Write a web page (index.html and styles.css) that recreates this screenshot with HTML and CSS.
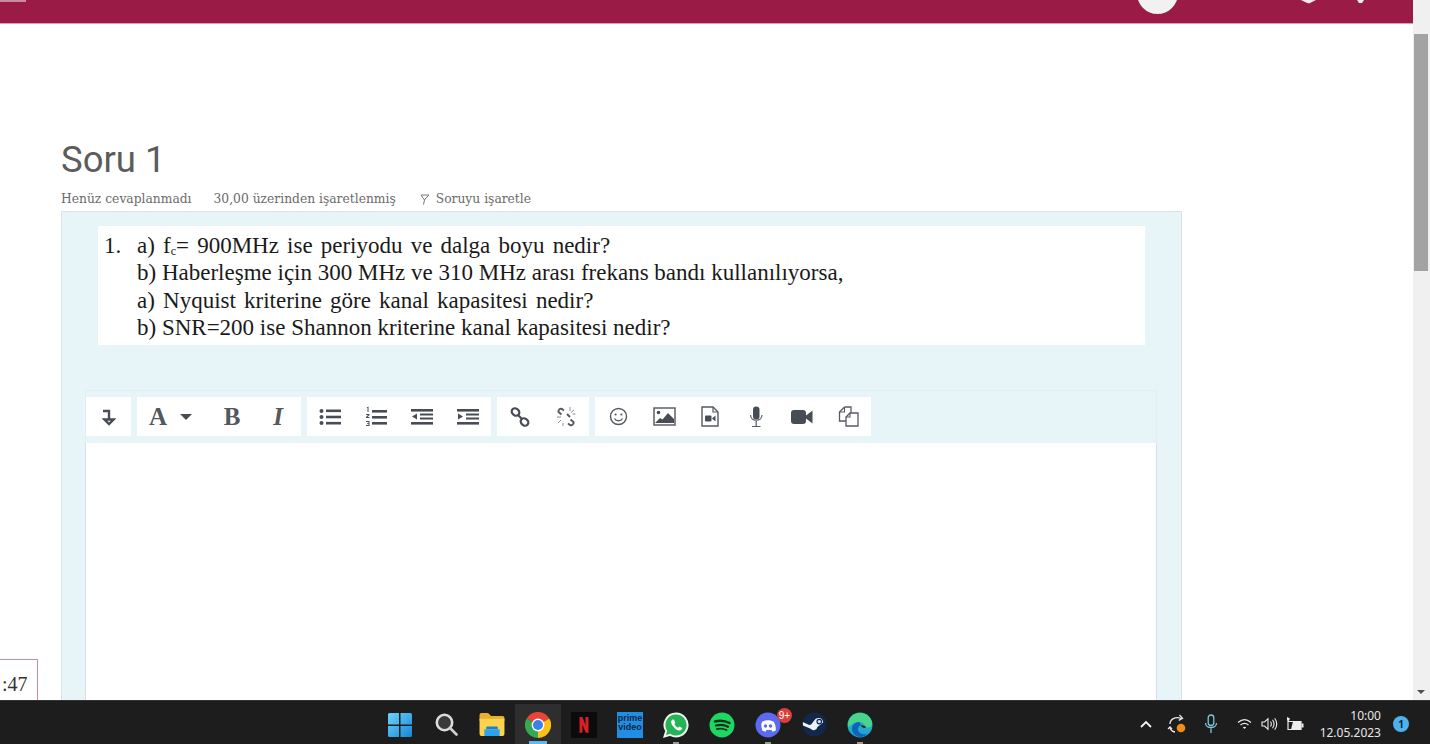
FILE: index.html
```html
<!DOCTYPE html>
<html lang="tr">
<head>
    <meta charset="UTF-8">
    <title>Soru 1</title>
    <link rel="stylesheet" href="styles.css">
</head>
<body>
    <div class="window">
        <div class="page">
            <header class="topbar">
                <span class="topbar-label"></span>
                <span class="avatar"></span>
                <svg class="topbar-icon first" width="15" height="4" viewBox="0 0 15 4"><path d="M0 0h15L8 3.500 5 2.500z" fill="#f6e9ee"/></svg>
                <svg class="topbar-icon second" width="9" height="3" viewBox="0 0 9 3"><path d="M1 0h7L6 3H3z" fill="#f6e9ee"/></svg>
            </header>

            <main class="content">
                <h1 class="question-title">Soru 1</h1>
                <div class="question-meta">
                    <span>Henüz cevaplanmadı</span>
                    <span>30,00 üzerinden işaretlenmiş</span>
                    <span class="flag-link">
                        <svg width="10" height="11" viewBox="0 0 10 11"><path d="M1 1h8L6 4 4.500 6 3.500 10.500M1 1l2 3 1.500 2" fill="none" stroke="#777" stroke-width="1"/></svg>
                        Soruyu işaretle
                    </span>
                </div>

                <section class="question-panel">
                    <div class="question-text">
                        <span class="question-number">1.</span>
                        <div>
                            <p class="wide">a) f<sub>c</sub>= 900MHz ise periyodu ve dalga boyu nedir?</p>
                            <p>b) Haberleşme için 300 MHz ve 310 MHz arası frekans bandı kullanılıyorsa,</p>
                            <p class="wide">a) Nyquist kriterine göre kanal kapasitesi nedir?</p>
                            <p>b) SNR=200 ise Shannon kriterine kanal kapasitesi nedir?</p>
                        </div>
                    </div>

                    <div class="editor">
                        <div class="toolbar">
                            <div class="tool-group">
                                <span class="tool narrow">
                                    <svg width="14" height="18" viewBox="0 0 14 18"><path d="M1 3h6v9M2.500 11.500h9L7 16z" fill="none" stroke="#484d55" stroke-width="2.400"/></svg>
                                </span>
                            </div>
                            <div class="tool-group">
                                <span class="tool font-tool"><span class="glyph">A</span><span class="caret"></span></span>
                                <span class="tool"><span class="glyph">B</span></span>
                                <span class="tool"><span class="glyph italic">I</span></span>
                            </div>
                            <div class="tool-group">
                                <span class="tool">
                                    <svg width="22" height="18" viewBox="0 0 22 18"><g fill="#484d55"><circle cx="2.500" cy="3" r="2"/><circle cx="2.500" cy="9" r="2"/><circle cx="2.500" cy="15" r="2"/><rect x="7" y="1.500" width="15" height="2.600"/><rect x="7" y="7.700" width="15" height="2.600"/><rect x="7" y="13.900" width="15" height="2.600"/></g></svg>
                                </span>
                                <span class="tool">
                                    <svg width="22" height="22" viewBox="0 0 22 22"><g fill="#484d55"><rect x="7" y="4" width="15" height="2.600"/><rect x="7" y="10" width="15" height="2.600"/><rect x="7" y="16" width="15" height="2.600"/><path d="M1.500 1.500l2-1v5.500h-1V2z"/><path d="M1 8h3.500v1L2.500 11h2v1H1v-1l2-2H1z"/><path d="M1 15h3.500v5H1v-1h2.500v-1H2v-.8h1.500V16H1z"/></g></svg>
                                </span>
                                <span class="tool">
                                    <svg width="22" height="18" viewBox="0 0 22 18"><g fill="#484d55"><rect x="0" y="1" width="22" height="2.600"/><rect x="9" y="5.500" width="13" height="2"/><rect x="9" y="9.500" width="13" height="2"/><rect x="0" y="14" width="22" height="2.600"/><path d="M6 5.500v6l-5-3z"/></g></svg>
                                </span>
                                <span class="tool">
                                    <svg width="22" height="18" viewBox="0 0 22 18"><g fill="#484d55"><rect x="0" y="1" width="22" height="2.600"/><rect x="9" y="5.500" width="13" height="2"/><rect x="9" y="9.500" width="13" height="2"/><rect x="0" y="14" width="22" height="2.600"/><path d="M1 5.500v6l5-3z"/></g></svg>
                                </span>
                            </div>
                            <div class="tool-group">
                                <span class="tool">
                                    <svg width="20" height="20" viewBox="0 0 20 20"><g fill="none" stroke="#484d55" stroke-width="2.200"><rect x="1.500" y="1.800" width="8" height="6.400" rx="3.200" transform="rotate(38 5.500 5)"/><rect x="10.500" y="11.800" width="8" height="6.400" rx="3.200" transform="rotate(38 14.500 15)"/><path d="M8 8l4 4"/></g></svg>
                                </span>
                                <span class="tool">
                                    <svg width="22" height="22" viewBox="0 0 22 22"><g fill="none" stroke="#565b63" stroke-width="2"><path d="M9 4.500L7 3C5 2 3 4 3.500 6l3 2.500"/><path d="M12 8l3 3M13 17.500l2 1.500c2 1 4-1 3.500-3l-3-2.500"/></g><g stroke="#8f9399" stroke-width="1"><path d="M15 1v4M19 4l-3 2.500M20.500 8h-3M2 11h4M3 17l3-3M8 20v-3"/></g></svg>
                                </span>
                            </div>
                            <div class="tool-group">
                                <span class="tool">
                                    <svg width="19" height="19" viewBox="0 0 19 19"><circle cx="9.500" cy="9.500" r="8" fill="none" stroke="#565b63" stroke-width="1.400"/><circle cx="6.600" cy="7.500" r="1.100" fill="#565b63"/><circle cx="12.400" cy="7.500" r="1.100" fill="#565b63"/><path d="M5.500 11.500c1.500 3 6.500 3 8 0" fill="none" stroke="#565b63" stroke-width="1.300"/></svg>
                                </span>
                                <span class="tool">
                                    <svg width="23" height="19" viewBox="0 0 23 19"><rect x="1" y="1" width="21" height="17" fill="#fff" stroke="#5b6068" stroke-width="1.500"/><circle cx="5.500" cy="5.500" r="1.800" fill="#484d55"/><path d="M2 16l5-5 2.500 1.500L15 6l6 6v4z" fill="#484d55"/></svg>
                                </span>
                                <span class="tool">
                                    <svg width="18" height="21" viewBox="0 0 18 21"><path d="M1 1h11l5 5v14H1z" fill="#fff" stroke="#565b63" stroke-width="1.400"/><path d="M12 1v5h5" fill="none" stroke="#565b63" stroke-width="1.200"/><rect x="4" y="9.500" width="6.500" height="6" rx="1" fill="#484d55"/><path d="M14.500 9.500v6l-3.500-3z" fill="#484d55"/></svg>
                                </span>
                                <span class="tool">
                                    <svg width="14" height="22" viewBox="0 0 14 22"><rect x="4" y="0.500" width="6.500" height="13" rx="3.200" fill="#484d55"/><path d="M1.500 9c0 7 11.500 7 11.500 0M7.200 15v5M3 20.500h8.500" fill="none" stroke="#565b63" stroke-width="1.200"/></svg>
                                </span>
                                <span class="tool">
                                    <svg width="22" height="16" viewBox="0 0 22 16"><rect x="0" y="1" width="15" height="14" rx="3" fill="#484d55"/><path d="M15 6.500L21.500 1.500v13L15 9.500z" fill="#484d55"/></svg>
                                </span>
                                <span class="tool">
                                    <svg width="21" height="21" viewBox="0 0 21 21"><path d="M6.500 1H13V7M6.500 1L1.500 6V15H8" fill="none" stroke="#565b63" stroke-width="1.300"/><path d="M6.500 1V6H1.500" fill="none" stroke="#565b63" stroke-width="1.100"/><path d="M12 7h8v13H8v-9z" fill="#fff" stroke="#565b63" stroke-width="1.300"/><path d="M12 7v4H8" fill="none" stroke="#565b63" stroke-width="1.100"/></svg>
                                </span>
                            </div>
                        </div>
                        <div class="editor-area"></div>
                    </div>
                </section>
            </main>

            <div class="timer">:47</div>
        </div>

        <aside class="scrollbar">
            <div class="scroll-thumb"></div>
            <span class="scroll-down"></span>
        </aside>
    </div>

    <footer class="taskbar">
        <div class="task-icons">
            <span class="task-icon">
                <svg width="26" height="26" viewBox="0 0 26 26"><defs><linearGradient id="win" x1="0" y1="0" x2="1" y2="1"><stop offset="0" stop-color="#6fd3f7"/><stop offset="1" stop-color="#1488d8"/></linearGradient></defs><path d="M1 2.500Q1 1 2.500 1H12v11.500H1zM13.500 1H23.500Q25 1 25 2.500V12.500H13.500zM1 14H12V25H2.500Q1 25 1 23.500zM13.500 14H25V23.500Q25 25 23.500 25H13.500z" fill="url(#win)"/></svg>
            </span>
            <span class="task-icon">
                <svg width="23" height="23" viewBox="0 0 23 23"><circle cx="9.500" cy="9.500" r="7.700" fill="#3a3a3a" stroke="#dcdcdc" stroke-width="2.600"/><path d="M15 15l6.500 6.500" stroke="#cfcfcf" stroke-width="2.600" stroke-linecap="round"/></svg>
            </span>
            <span class="task-icon">
                <svg width="26" height="23" viewBox="0 0 26 24"><path d="M0 2q0-2 2-2h7l3 3h12q2 0 2 2v3H0z" fill="#e8b02c"/><path d="M0 6h26v16q0 2-2 2H2q-2 0-2-2z" fill="#fbd34e"/><path d="M7 15q0-1 1-1h10q1 0 1 1v2H7z" fill="#1d7fd0"/><path d="M5 17h16v7H5z" fill="#2aa3ea"/></svg>
            </span>
            <span class="task-icon active">
                <svg width="26" height="26" viewBox="0 0 26 26"><path d="M13 13L24.300 6.500A13 13 0 0 0 1.700 6.500z" fill="#e8443a"/><path d="M13 13L1.700 6.500A13 13 0 0 0 13 26z" fill="#34a853"/><path d="M13 13L13 26A13 13 0 0 0 24.300 6.500z" fill="#fbc116"/><circle cx="13" cy="13" r="6.400" fill="#fff"/><circle cx="13" cy="13" r="5" fill="#3a80ea"/></svg>
            </span>
            <span class="task-icon">
                <svg width="26" height="26" viewBox="0 0 26 26"><rect width="26" height="26" fill="#0b0b0b"/><path d="M8.500 5h3l3 8V5h3v16l-3-.5-3-8v8l-3 .5z" fill="#d81f26"/></svg>
            </span>
            <span class="task-icon">
                <span class="prime-logo">prime<br>video</span>
            </span>
            <span class="task-icon running">
                <svg width="26" height="26" viewBox="0 0 26 26"><path d="M13 1.500a11.500 11.500 0 0 0-9.800 17.500L1.500 24.500l5.700-1.600A11.500 11.500 0 1 0 13 1.500z" fill="#25b455" stroke="#eef5ee" stroke-width="2"/><path d="M9.500 7.500c-1.500 1-2 3 0 6s4.500 5 7 5c1.500 0 2.500-1 2.700-2.500l-3-1.500-1.200 1.300c-1.500-.6-3-2.300-3.700-3.700l1-1.300-1.300-3z" fill="#fff"/></svg>
            </span>
            <span class="task-icon">
                <svg width="26" height="26" viewBox="0 0 26 26"><circle cx="13" cy="13" r="12.500" fill="#1ed760"/><g fill="none" stroke="#10331d" stroke-linecap="round"><path d="M6 9.500c5-1.500 10-1 14.500 1.500" stroke-width="2.500"/><path d="M7 13.500c4-1 8.500-.8 12 1.300" stroke-width="2.200"/><path d="M8 17c3.500-.8 6.500-.5 9.500 1" stroke-width="1.800"/></g></svg>
            </span>
            <span class="task-icon running">
                <svg width="26" height="26" viewBox="0 0 26 26"><circle cx="13" cy="13" r="12.500" fill="#5b6aef"/><path d="M7 10c3-2.500 9-2.500 12 0 1.500 3 2 6 1.800 8.500l-3.300 1.200-1-1.700h-5l-1 1.700-3.300-1.200C7 16 5.500 13 7 10z" fill="#fff"/><circle cx="10.500" cy="14" r="1.700" fill="#5b6aef"/><circle cx="15.500" cy="14" r="1.700" fill="#5b6aef"/></svg>
                <span class="badge">9+</span>
            </span>
            <span class="task-icon">
                <svg width="25" height="25" viewBox="0 0 26 26"><circle cx="13" cy="13" r="12.500" fill="#11284c"/><path d="M1 14l8 3.500a4 4 0 0 0 7-2L22 11a5 5 0 0 0-9.500-2L9.500 13a4 4 0 0 0-2 .5L.8 10.500z" fill="#eef2f6"/><circle cx="18" cy="10" r="3" fill="#11284c"/><circle cx="18" cy="10" r="1.800" fill="#d5dde6"/></svg>
            </span>
            <span class="task-icon running">
                <svg width="26" height="26" viewBox="0 0 26 26"><defs><linearGradient id="edgeA" x1="0" y1="0" x2="0" y2="1"><stop offset="0" stop-color="#2fc4a0"/><stop offset="1" stop-color="#1f9ae0"/></linearGradient></defs><circle cx="13" cy="13" r="12.500" fill="url(#edgeA)"/><path d="M1 13C1 5 8 1 13 1c7 0 12 5 12 11 0 3-3 4-6 3-1-3-3-5-7-5C6 10 3 14 1 15z" fill="#48d48a"/><path d="M12 10c-4 0-7 3-7 7 0 4 4 8 8 8 3 0 5-1 7-3-5 1-9-1-9-5 0-2 1-3 3-4-.5-1.500-1-3-2-3z" fill="#0f63b8"/><path d="M14 13c2 0 4 1 5 2l-1 1c-2 0-4-1-4-3z" fill="#1c2530"/></svg>
            </span>
        </div>

        <div class="tray">
            <svg class="tray-chevron" width="12" height="8" viewBox="0 0 12 8"><path d="M1 7l5-5 5 5" fill="none" stroke="#f2f2f2" stroke-width="1.800"/></svg>
            <svg class="tray-sync" width="20" height="20" viewBox="0 0 20 20"><g fill="none" stroke="#e6e6e6" stroke-width="1.300"><path d="M3 10C3 5.500 8 2 14.500 4.500"/><path d="M12.500 1l3 3.300-3.800 2"/><path d="M3 13.500c.5 2 2 4 5 4.500"/><path d="M1 15l2-2 2 2"/></g><circle cx="14" cy="14" r="4.300" fill="#f08c1e"/></svg>
            <svg class="tray-mic" width="14" height="20" viewBox="0 0 14 20"><rect x="4.200" y="1" width="5.600" height="10.500" rx="2.800" fill="none" stroke="#7cc6dc" stroke-width="1.300"/><path d="M1.500 9c0 6 11 6 11 0M7 14.500V19" fill="none" stroke="#7cc6dc" stroke-width="1.300"/></svg>
            <svg class="tray-wifi" width="15" height="12" viewBox="0 0 15 12"><g fill="none" stroke="#ececec" stroke-width="1.200"><path d="M1 4.500c4-3.500 9-3.500 13 0"/><path d="M3.500 7c2.500-2 5.500-2 8 0"/></g><path d="M5.800 9.300c1-.9 2.400-.9 3.400 0L7.500 11z" fill="#ececec"/></svg>
            <svg class="tray-sound" width="17" height="14" viewBox="0 0 17 14"><g fill="none" stroke="#ececec" stroke-width="1.100"><path d="M1 5h2.500L7 1.800v10.400L3.500 9H1z"/><path d="M9.500 4.500c1 1.500 1 3.500 0 5M11.500 2.800c1.800 2.500 1.800 6 0 8.500M13.700 1.300c2.500 3.500 2.500 8 0 11.400"/></g></svg>
            <svg class="tray-battery" width="18" height="14" viewBox="0 0 18 14"><path d="M2 4.500h13v8H2z" fill="none" stroke="#ececec" stroke-width="1.200"/><path d="M7 4.500h8v8H5z" fill="#ececec"/><rect x="15.500" y="6.500" width="2" height="4" fill="#ececec"/><path d="M1 0l3 1.500-1.500 3L1 3.500z" fill="#ececec"/></svg>
            <div class="clock">
                <span>10:00</span>
                <span>12.05.2023</span>
            </div>
            <span class="notify">1</span>
        </div>
    </footer>
</body>
</html>
```

FILE: styles.css
```css
* {
    box-sizing: border-box;
}
html, body {
    height: 100%;
}
body {
    margin: 0;
    height: 744px;
    overflow: hidden;
    display: flex;
    flex-direction: column;
    background: #fff;
    font-family: "Liberation Serif", serif;
}

.window {
    flex: 1;
    display: flex;
    min-height: 0;
}
.page {
    flex: 1;
    position: relative;
    overflow: hidden;
    display: flex;
    flex-direction: column;
}

.topbar {
    height: 24px;
    flex: none;
    display: flex;
    align-items: flex-start;
    overflow: hidden;
    background: #9a1c46;
    border-bottom: 1px solid #e59ab4;
}
.topbar-label {
    width: 26px;
    height: 2px;
    background: #c98aa2;
}
.avatar {
    width: 41px;
    height: 41px;
    margin: -27px 0 0 1111px;
    border-radius: 50%;
    background: #f1f1f1;
    flex: none;
}
.topbar-icon.first {
    margin-left: 123px;
}
.topbar-icon.second {
    margin-left: 40px;
}

.content {
    flex: 1;
    min-height: 0;
    padding: 118px 231px 0 61px;
    display: flex;
    flex-direction: column;
}
.question-title {
    margin: 0;
    font-family: Roboto, sans-serif;
    font-weight: 400;
    font-size: 36.500px;
    line-height: 36px;
    color: #5c5c5c;
}
.question-meta {
    margin-top: 13px;
    height: 20px;
    display: flex;
    gap: 22px;
    font-family: "DejaVu Serif", serif;
    font-size: 12.300px;
    line-height: 16px;
    color: #6b6b6b;
}
.flag-link {
    display: flex;
    align-items: center;
    gap: 6px;
    height: 16px;
    margin-left: 2px;
}
.question-panel {
    flex: 1;
    min-height: 0;
    padding: 14px 24px 0 23px;
    background: #e8f5f8;
    border: 1px solid #d3e6ec;
    border-bottom: 0;
    display: flex;
    flex-direction: column;
}
.question-text {
    margin: 0 12px 0 13px;
    height: 119px;
    padding: 6px 6px;
    display: flex;
    gap: 18px;
    background: #fff;
    color: #1a1a1a;
    font-size: 23px;
    line-height: 27.300px;
}
.question-text p {
    margin: 0;
    white-space: nowrap;
}
.question-text p.wide {
    word-spacing: 2.400px;
}
.question-text sub {
    font-size: 12px;
    line-height: 0;
    vertical-align: -2px;
}
.question-number {
    flex: none;
    width: 15px;
}

.editor {
    flex: 1;
    min-height: 0;
    margin-top: 45px;
    display: flex;
    flex-direction: column;
}
.toolbar {
    height: 53px;
    flex: none;
    padding: 6px 0 0;
    display: flex;
    align-items: flex-start;
    gap: 6px;
    border-top: 1px solid #e0eff4;
    border-left: 1px solid #e0eff4;
    border-right: 1px solid #e0eff4;
}
.tool-group {
    height: 39px;
    display: flex;
    background: #fff;
}
.tool {
    width: 46px;
    height: 39px;
    display: flex;
    align-items: center;
    justify-content: center;
}
.tool.narrow {
    width: 45px;
}
.font-tool {
    width: 72px;
    gap: 13px;
    padding-right: 5px;
}
.glyph {
    font-size: 25px;
    font-weight: 700;
    color: #53585f;
    line-height: 1;
}
.glyph.italic {
    font-style: italic;
}
.caret {
    width: 0;
    height: 0;
    border-left: 6px solid transparent;
    border-right: 6px solid transparent;
    border-top: 6px solid #484d55;
}
.editor-area {
    flex: 1;
    background: #fff;
    border-left: 1px solid #d3e0e6;
    border-right: 1px solid #d3e0e6;
}

.timer {
    position: absolute;
    left: -1px;
    bottom: 0;
    width: 39px;
    height: 41px;
    padding-left: 2px;
    border: 1px solid #cf8a9a;
    border-bottom: 0;
    background: #fff;
    color: #333;
    font-size: 20px;
    line-height: 48px;
}

.scrollbar {
    width: 17px;
    flex: none;
    position: relative;
    padding: 34px 2px 0 1px;
    background: #f0f0f0;
}
.scroll-thumb {
    height: 237px;
    background: #a3a3a3;
}
.scroll-down {
    position: absolute;
    left: 4px;
    bottom: 6px;
    border-left: 4px solid transparent;
    border-right: 4px solid transparent;
    border-top: 4px solid #505050;
}

.taskbar {
    height: 44px;
    flex: none;
    display: flex;
    align-items: center;
    padding-left: 377px;
    background: #1d1d1d;
    border-top: 1px solid #333;
}
.task-icons {
    display: flex;
    height: 100%;
}
.task-icon {
    position: relative;
    width: 46px;
    height: 100%;
    padding-top: 4px;
    display: flex;
    align-items: center;
    justify-content: center;
}
.task-icon.active {
    background: linear-gradient(#1d1d1d 3px, #2e2e2e 3px);
}
.task-icon.active::after {
    content: "";
    position: absolute;
    left: 14px;
    bottom: 0;
    width: 18px;
    height: 3px;
    background: #62b7f2;
}
.task-icon.running::after {
    content: "";
    position: absolute;
    left: 20px;
    bottom: 0;
    width: 6px;
    height: 2px;
    background: #999;
}
.prime-logo {
    width: 26px;
    height: 26px;
    padding-top: 2px;
    background: #1f8fe6;
    color: #12233d;
    font-family: "Liberation Sans", sans-serif;
    font-size: 9px;
    font-weight: 700;
    line-height: 9px;
    text-align: center;
}
.badge {
    position: absolute;
    right: -1px;
    top: 7px;
    width: 15px;
    height: 15px;
    border-radius: 50%;
    background: #d9403c;
    color: #fff;
    font-family: "Liberation Sans", sans-serif;
    font-size: 10px;
    line-height: 15px;
    text-align: center;
}

.tray {
    margin-left: auto;
    height: 100%;
    display: flex;
    align-items: center;
    padding: 3px 21px 0 0;
    color: #e6e6e6;
}
.tray-chevron {
    margin-right: 15px;
}
.tray-sync {
    margin-right: 17px;
}
.tray-mic {
    margin-right: 19px;
}
.tray-wifi {
    margin-right: 9px;
}
.tray-sound {
    margin-right: 8px;
}
.tray-battery {
    margin-right: 16px;
}
.clock {
    display: flex;
    flex-direction: column;
    align-items: flex-end;
    font-family: "Noto Sans", sans-serif;
    font-size: 12px;
    line-height: 17px;
    margin-right: 12px;
}
.notify {
    width: 16px;
    height: 16px;
    border-radius: 50%;
    background: #4db2ee;
    color: #10243a;
    font-family: "Noto Sans", sans-serif;
    font-size: 10px;
    font-weight: 700;
    line-height: 16px;
    text-align: center;
}
```
